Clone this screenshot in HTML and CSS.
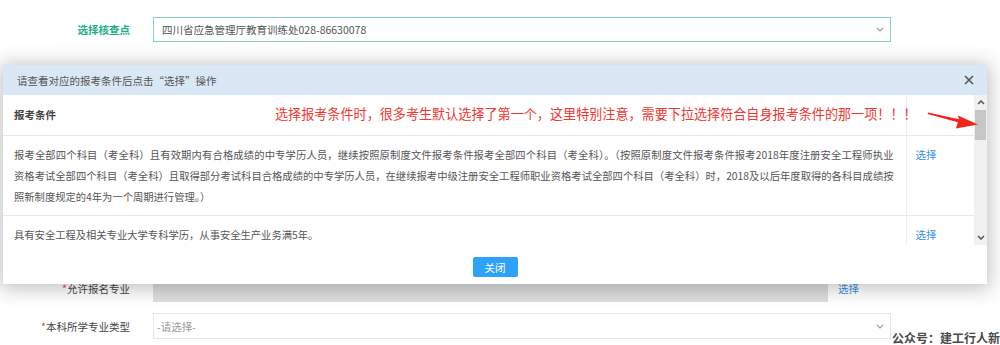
FILE: index.html
```html
<!DOCTYPE html>
<html lang="zh-CN">
<head>
<meta charset="utf-8">
<title>选择核查点</title>
<link rel="stylesheet" href="styles.css">
</head>
<body>
<div class="page">
  <div class="form">
    <div class="row">
      <div class="label label-green">选择核查点</div>
      <div class="select select-green">
        <span>四川省应急管理厅教育训练处028-86630078</span>
        <svg class="chev" width="8" height="5" viewBox="0 0 8 5"><path d="M1 1l3 3 3-3" fill="none" stroke="#999" stroke-width="1.1"/></svg>
      </div>
    </div>
    <div class="row row-major">
      <div class="label"><i class="req">*</i>允许报名专业</div>
      <div class="disabled-box"></div>
      <a class="link link-side">选择</a>
    </div>
    <div class="row row-next">
      <div class="label"><i class="req">*</i>本科所学专业类型</div>
      <div class="select select-plain">
        <span>-请选择-</span>
        <svg class="chev" width="8" height="5" viewBox="0 0 8 5"><path d="M1 1l3 3 3-3" fill="none" stroke="#999" stroke-width="1.1"/></svg>
      </div>
    </div>
  </div>

  <div class="modal">
    <div class="modal-head">
      <span class="modal-title">请查看对应的报考条件后点击“选择”操作</span>
      <svg class="close" width="10" height="10" viewBox="0 0 10 10"><path d="M1 1l8 8M9 1l-8 8" stroke="#555" stroke-width="1.6"/></svg>
    </div>
    <div class="modal-body">
      <div class="table-wrap">
        <table class="cond">
          <tr class="head">
            <th class="c-text">报考条件</th>
            <th class="c-op"></th>
          </tr>
          <tr>
            <td class="c-text">
              <span class="ln fill">报考全部四个科目（考全科）且有效期内有合格成绩的中专学历人员，继续按照原制度文件报考条件报考全部四个科目（考全科）。（按照原制度文件报考条件报考2018年度注册安全工程师执业</span>
              <span class="ln fill">资格考试全部四个科目（考全科）且取得部分考试科目合格成绩的中专学历人员，在继续报考中级注册安全工程师职业资格考试全部四个科目（考全科）时，2018及以后年度取得的各科目成绩按</span>
              <span class="ln">照新制度规定的4年为一个周期进行管理。）</span>
            </td>
            <td class="c-op"><a class="link">选择</a></td>
          </tr>
          <tr>
            <td class="c-text"><span class="ln">具有安全工程及相关专业大学专科学历，从事安全生产业务满5年。</span></td>
            <td class="c-op"><a class="link">选择</a></td>
          </tr>
        </table>
      </div>
      <div class="scrollbar">
        <svg class="sb-arrow" width="8" height="5" viewBox="0 0 8 5"><path d="M1 4l3-3 3 3" fill="none" stroke="#555" stroke-width="1.5"/></svg>
        <div class="sb-thumb"></div>
        <div class="sb-track"></div>
        <svg class="sb-arrow" width="8" height="5" viewBox="0 0 8 5"><path d="M1 1l3 3 3-3" fill="none" stroke="#555" stroke-width="1.5"/></svg>
      </div>
    </div>
    <div class="modal-foot">
      <button class="btn">关闭</button>
    </div>
    <div class="note">选择报考条件时，很多考生默认选择了第一个，这里特别注意，需要下拉选择符合自身报考条件的那一项！！！</div>
    <svg class="arrow" width="54" height="20" viewBox="0 0 54 20"><path d="M2 1.5L33 8.2L32 4.5L52 13.5L30 17.5L31.8 11.2L1.5 3Z" fill="#f2271c"/></svg>
  </div>

  <div class="watermark">公众号：建工行人新</div>
</div>
</body>
</html>
```

FILE: styles.css
```css
* { box-sizing: border-box; }
html, body { margin: 0; padding: 0; }
body {
  background: #fff;
  font-family: "Noto Sans CJK SC", "Liberation Sans", sans-serif;
  color: #555;
  width: 1000px;
  height: 345px;
  overflow: hidden;
}
.page { position: relative; width: 1000px; height: 345px; }

.form { padding-top: 17px; }
.row { display: flex; align-items: center; height: 25px; }
.row-major { margin-top: 232px; height: 28px; }
.row-next { margin-top: 11px; height: 26px; }
.label {
  width: 153px;
  padding-right: 23px;
  text-align: right;
  font-size: 10.5px;
  color: #444;
}
.label-green { color: #1fae8a; font-weight: bold; }
.req { font-style: normal; color: #e8413b; }

.select {
  width: 738px;
  height: 100%;
  display: flex;
  align-items: center;
  justify-content: space-between;
  font-size: 10.5px;
  background: #fff;
}
.select-green { border: 1px solid #86d2bb; padding: 0 6px 0 8px; color: #555; }
.select-plain { border: 1px solid #e6e6e6; padding: 0 6px 0 3px; color: #999; }
.chev { display: block; }

.disabled-box { width: 675px; height: 28px; background: #dedede; }
.link { color: #3a8ee6; font-size: 10.5px; cursor: pointer; }
.link-side { margin-left: 10px; }

.modal {
  position: absolute;
  left: 3px;
  top: 65px;
  width: 984px;
  height: 219px;
  background: #fff;
  display: flex;
  flex-direction: column;
  box-shadow: 0 2px 18px 3px rgba(0, 0, 0, 0.24);
}
.modal-head {
  height: 30px;
  flex: none;
  background: #dae7f4;
  display: flex;
  align-items: center;
  justify-content: space-between;
  padding: 0 13px 0 14px;
}
.modal-title { font-size: 10.5px; color: #555; }
.close { display: block; }

.modal-body { height: 150px; flex: none; display: flex; }
.table-wrap { flex: 1; overflow: hidden; }
.cond { border-collapse: collapse; width: 971px; table-layout: fixed; }
.cond .c-text { width: 903px; text-align: left; padding: 8px 12px 8px 11px; }
.cond .c-op { width: 68px; border-left: 1px solid #eeeeee; padding: 8px 9px; vertical-align: top; }
.cond tr { border-bottom: 1px solid #e8e8e8; }
.cond td { font-size: 10.3px; line-height: 21px; color: #555; vertical-align: top; }
.cond .head th { height: 40px; font-size: 10.5px; font-weight: bold; color: #444; padding-top: 0; padding-bottom: 0; }
.cond .c-op .link { line-height: 21px; }
.ln { display: block; white-space: nowrap; }
.ln.fill { text-align: justify; text-align-last: justify; white-space: normal; }

.scrollbar {
  width: 13px;
  flex: none;
  display: flex;
  flex-direction: column;
  align-items: center;
  background: #f1f1f1;
}
.sb-arrow { display: block; margin: 5px 0; }
.sb-thumb { width: 11px; height: 30px; background: #c6c6c6; }
.sb-track { flex: 1; }

.modal-foot {
  flex: 1;
  display: flex;
  justify-content: center;
  padding-top: 12px;
}
.btn {
  width: 45px;
  height: 20px;
  border: none;
  border-radius: 2px;
  background: #2ea2f8;
  color: #fff;
  font-family: inherit;
  font-size: 10.5px;
  padding: 0;
}

.note {
  position: absolute;
  left: 272px;
  top: 40px;
  font-size: 13.1px;
  line-height: 18px;
  color: #f0362f;
  white-space: nowrap;
}
.arrow { position: absolute; left: 923px; top: 46px; }

.watermark {
  position: absolute;
  right: 0;
  bottom: 0;
  font-size: 12px;
  line-height: 15px;
  font-weight: bold;
  color: #4a4a4a;
  white-space: nowrap;
  text-shadow: 0 0 3px #fff;
}
```
